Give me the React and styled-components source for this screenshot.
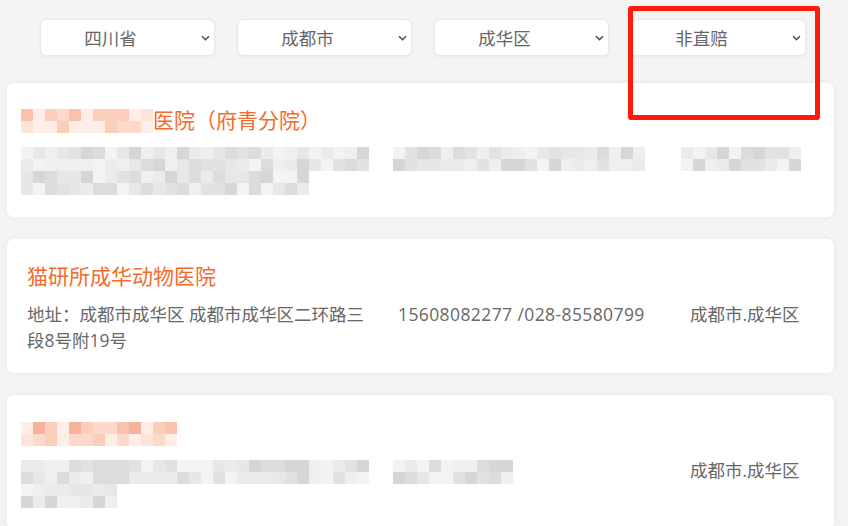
import React from "react";
import styled, { createGlobalStyle } from "styled-components";

const GlobalStyle = createGlobalStyle`
  html, body {
    margin: 0;
    padding: 0;
    background: #f4f4f4;
    font-family: "Open Sans", "Noto Sans CJK SC", sans-serif;
  }
`;

const Page = styled.div`
  position: relative;
  width: 848px;
  height: 526px;
  overflow: hidden;
  box-sizing: border-box;
  padding: 19px 14px 0 7px;
`;

const FilterBar = styled.div`
  display: flex;
  gap: 22px;
  padding-left: 33px;
`;

const SelectWrap = styled.div`
  position: relative;
  width: 175px;
  height: 37px;
`;

const Select = styled.select`
  width: 100%;
  height: 100%;
  appearance: none;
  background: #fff;
  border: 1px solid #e8e8e8;
  border-radius: 6px;
  box-shadow: 0 1px 3px rgba(0, 0, 0, 0.06);
  font-family: inherit;
  font-size: 17.5px;
  color: #666;
  text-align: center;
  text-align-last: center;
  padding: 0 34px 0 0;
  outline: none;
`;

const Chevron = styled.svg`
  position: absolute;
  right: 5px;
  top: 16px;
  width: 9px;
  height: 6px;
  pointer-events: none;
`;

const List = styled.div`
  display: flex;
  flex-direction: column;
  gap: 22px;
  margin-top: 27px;
`;

const Card = styled.div`
  background: #fff;
  border-radius: 7px;
  box-shadow: 0 0 10px rgba(0, 0, 0, 0.05);
  padding: 24px 20px 19px 20px;
`;

const Title = styled.div`
  display: flex;
  align-items: center;
  height: 26px;
  font-size: 21px;
  line-height: 26px;
  color: #f36b2c;
  white-space: nowrap;
`;

const InfoRow = styled.div`
  display: grid;
  grid-template-columns: 350px 271px 1fr;
  column-gap: 21px;
  min-height: 53px;
  margin-top: 12px;
  font-size: 17.5px;
  line-height: 26px;
  color: #676767;
`;

const Cell = styled.div`
  margin-left: ${(p) => p.$shift || 0}px;
`;

const Phone = styled.div`
  letter-spacing: 0.4px;
`;

const MosaicGrid = styled.div`
  display: grid;
  grid-template-columns: repeat(${(p) => p.$cols}, 12px);
  grid-auto-rows: 12px;
  width: max-content;
  margin-top: ${(p) => p.$top || 0}px;
`;

const palettes = {
  gray: ["#d6d6d6", "#dcdcdc", "#e2e2e2", "#e7e7e7", "#ebebeb", "#efefef", "#f3f3f3"],
  orange: ["#f7b39a", "#f9c2ac", "#fbcdbb", "#fcd9cb", "#fde4d9", "#feeee7"],
};

const Mosaic = ({ cols, rows = 2, tone = "gray", seed = 1, top }) => {
  const pal = palettes[tone];
  let s = seed * 9301 + 49297;
  const cells = [];
  for (let r = 0; r < rows; r++) {
    for (let c = 0; c < cols; c++) {
      s = (s * 9301 + 49297) % 233280;
      let idx = Math.floor((s / 233280) * pal.length);
      if (tone === "orange" && r % 2 === 1) idx = Math.min(pal.length - 1, idx + 2);
      cells.push(<span key={r + "-" + c} style={{ background: pal[idx] }} />);
    }
  }
  return (
    <MosaicGrid $cols={cols} $top={top}>
      {cells}
    </MosaicGrid>
  );
};

const Highlight = styled.div`
  position: absolute;
  left: 628px;
  top: 6px;
  width: 192px;
  height: 114px;
  box-sizing: border-box;
  border: 5px solid #ff1b0c;
  border-radius: 3px;
  pointer-events: none;
`;

const filters = ["四川省", "成都市", "成华区", "非直赔"];

export default function App() {
  return (
    <Page>
      <GlobalStyle />
      <FilterBar>
        {filters.map((label) => (
          <SelectWrap key={label}>
            <Select defaultValue={label}>
              <option>{label}</option>
            </Select>
            <Chevron viewBox="0 0 9 6">
              <path d="M1 1.2 L4.5 4.6 L8 1.2" fill="none" stroke="#555" strokeWidth="1.6" />
            </Chevron>
          </SelectWrap>
        ))}
      </FilterBar>

      <List>
        <Card>
          <Title>
            <Cell $shift={-6}>
              <Mosaic cols={11} tone="orange" seed={3} top={2} />
            </Cell>
            <span>医院（府青分院）</span>
          </Title>
          <InfoRow>
            <Cell $shift={-6}>
              <Mosaic cols={29} seed={5} top={2} />
              <Mosaic cols={24} seed={7} />
            </Cell>
            <Cell $shift={-5}>
              <Mosaic cols={21} seed={11} top={2} />
            </Cell>
            <Cell $shift={-9}>
              <Mosaic cols={10} seed={13} top={2} />
            </Cell>
          </InfoRow>
        </Card>

        <Card>
          <Title>猫研所成华动物医院</Title>
          <InfoRow>
            <Cell>地址：成都市成华区 成都市成华区二环路三段8号附19号</Cell>
            <Phone>15608082277 /028-85580799</Phone>
            <Cell>成都市.成华区</Cell>
          </InfoRow>
        </Card>

        <Card>
          <Title>
            <Cell $shift={-6}>
              <Mosaic cols={13} tone="orange" seed={17} top={4} />
            </Cell>
          </Title>
          <InfoRow>
            <Cell $shift={-6}>
              <Mosaic cols={29} seed={19} top={3} />
              <Mosaic cols={8} seed={23} />
            </Cell>
            <Cell $shift={-5}>
              <Mosaic cols={10} seed={29} top={3} />
            </Cell>
            <Cell>成都市.成华区</Cell>
          </InfoRow>
        </Card>
      </List>

      <Highlight />
    </Page>
  );
}
